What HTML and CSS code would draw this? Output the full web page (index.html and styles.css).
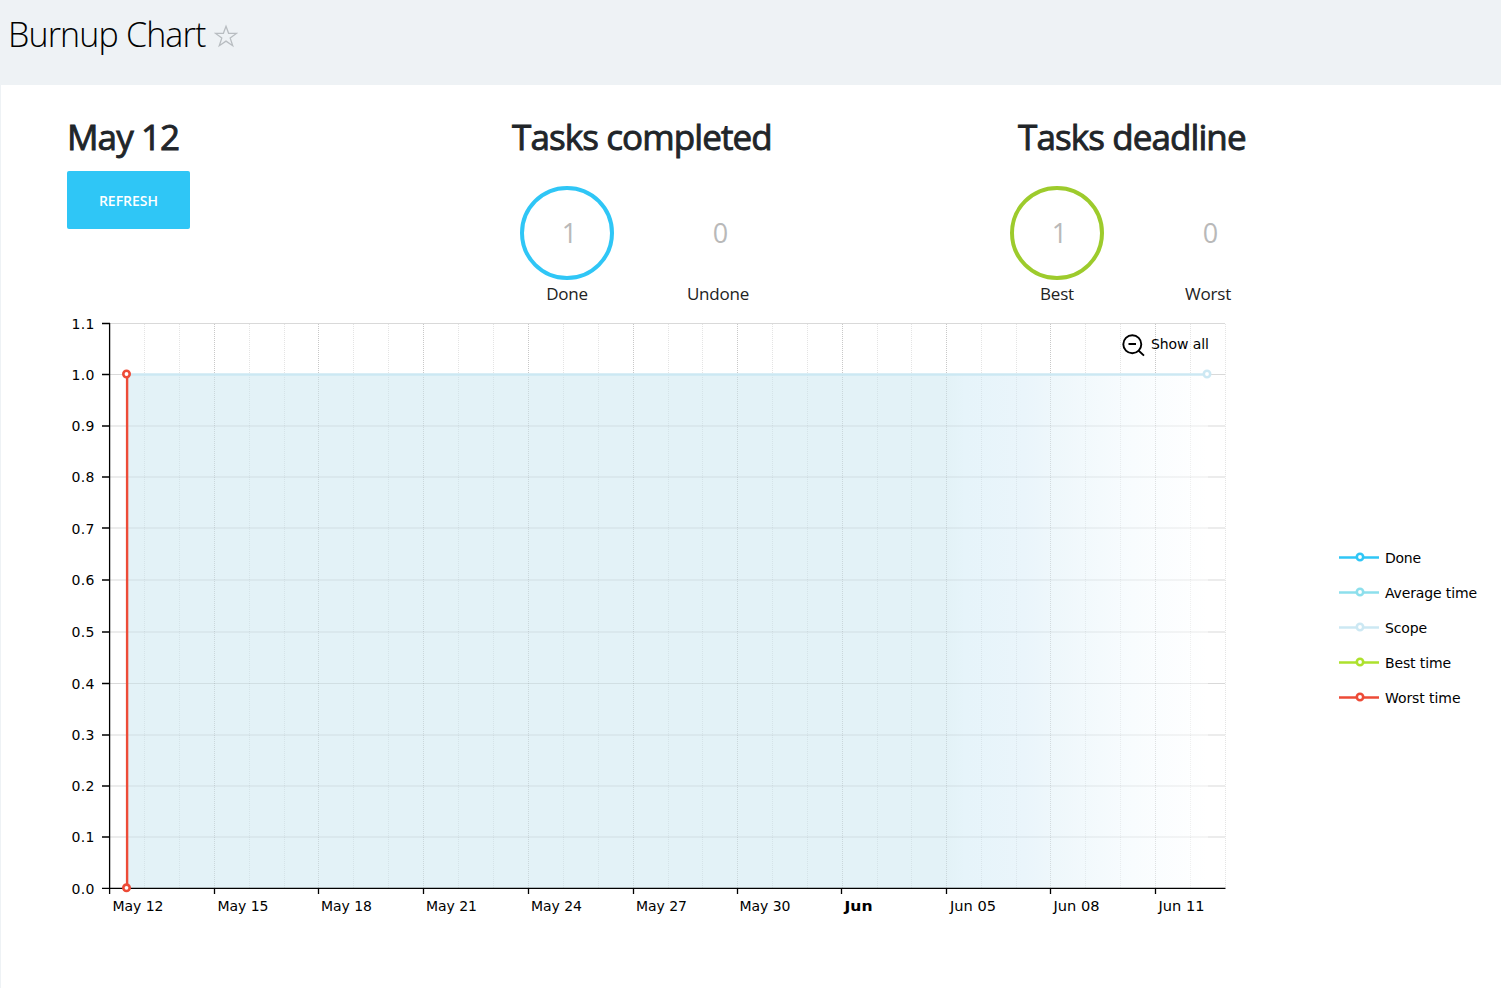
FILE: index.html
```html
<!DOCTYPE html>
<html lang="en">
<head>
<meta charset="utf-8">
<title>Burnup Chart</title>
<link rel="stylesheet" href="styles.css">
</head>
<body>
<header class="page-header">
  <h1 class="page-title">Burnup Chart</h1>
  <svg class="star" width="24" height="24" viewBox="0 0 24 24"><path d="M12 2.3 14.6 9.3 22.4 9.4 16.2 14.1 18.7 21.7 12 17.1 5.3 21.7 7.8 14.1 1.6 9.4 9.4 9.3Z"/></svg>
</header>
<main class="panel">
  <section class="summary">
    <div class="today">
      <h2 class="heading">May 12</h2>
      <button class="refresh">REFRESH</button>
    </div>
    <div class="group">
      <h2 class="heading">Tasks completed</h2>
      <div class="gauges">
        <div class="gauge"><div class="ring ring-done">1</div><span class="caption">Done</span></div>
        <div class="gauge"><div class="ring">0</div><span class="caption">Undone</span></div>
      </div>
    </div>
    <div class="group group-deadline">
      <h2 class="heading">Tasks deadline</h2>
      <div class="gauges">
        <div class="gauge"><div class="ring ring-best">1</div><span class="caption">Best</span></div>
        <div class="gauge"><div class="ring">0</div><span class="caption">Worst</span></div>
      </div>
    </div>
  </section>
  <section class="chart-row">
    <svg class="chart" width="1180" height="620" viewBox="60 310 1180 620">
      <defs>
        <linearGradient id="scope" gradientUnits="userSpaceOnUse" x1="127" y1="0" x2="1208" y2="0">
          <stop offset="0" stop-color="#e3f2f7"/>
          <stop offset=".758" stop-color="#e3f2f7"/>
          <stop offset=".775" stop-color="#e6f4fa"/>
          <stop offset=".83" stop-color="#eaf5fb"/>
          <stop offset=".855" stop-color="#eef7fb"/>
          <stop offset=".93" stop-color="#f8fcfe"/>
          <stop offset="1" stop-color="#ffffff"/>
        </linearGradient>
      </defs>
      <path class="grid-outer" d="M110 323.5H1225M110 374.5H1225M110 426H127M1208 426H1225M110 477H127M1208 477H1225M110 528H127M1208 528H1225M110 580H127M1208 580H1225M110 632H127M1208 632H1225M110 683.5H127M1208 683.5H1225M110 735H127M1208 735H1225M110 786H127M1208 786H1225M110 837H127M1208 837H1225"/>
      <path fill="url(#scope)" d="M127 374.5H1208V888H127Z"/>
      <path class="grid-inner" d="M127 426H1208M127 477H1208M127 528H1208M127 580H1208M127 632H1208M127 683.5H1208M127 735H1208M127 786H1208M127 837H1208"/>
      <path class="grid-minor" d="M144.5 324V374M179.5 324V374M249.5 324V374M284.5 324V374M353.5 324V374M388.5 324V374M458.5 324V374M493.5 324V374M563.5 324V374M598.5 324V374M668.5 324V374M702.5 324V374M772.5 324V374M807.5 324V374M877.5 324V374M911.5 324V374M981.5 324V374M1016.5 324V374M1085.5 324V374M1120.5 324V374M1190.5 324V374M1225.5 324V888"/>
      <path class="grid-minor faint" d="M144.5 375V888M179.5 375V888M249.5 375V888M284.5 375V888M353.5 375V888M388.5 375V888M458.5 375V888M493.5 375V888M563.5 375V888M598.5 375V888M668.5 375V888M702.5 375V888M772.5 375V888M807.5 375V888M877.5 375V888M911.5 375V888M981.5 375V888M1016.5 375V888M1085.5 375V888M1120.5 375V888M1190.5 375V888"/>
      <path class="grid-major" d="M214.5 324V374M318.5 324V374M423.5 324V374M528.5 324V374M633.5 324V374M737.5 324V374M842.5 324V374M946.5 324V374M1050.5 324V374M1155.5 324V374"/>
      <path class="grid-major faint" d="M214.5 375V888M318.5 375V888M423.5 375V888M528.5 375V888M633.5 375V888M737.5 375V888M842.5 375V888M946.5 375V888M1050.5 375V888M1155.5 375V888"/>
      <path class="axis" d="M109.6 323V894M102 888.4H1225.5M102 323.5H110M102 374.5H110M102 426H110M102 477H110M102 528H110M102 580H110M102 632H110M102 683.5H110M102 735H110M102 786H110M102 837H110M214.5 888V894M318.5 888V894M423.5 888V894M528.5 888V894M633.5 888V894M737.5 888V894M841.5 888V894M946.5 888V894M1050.5 888V894M1155.5 888V894"/>
      <path class="line-scope" d="M127 374.5H1207"/>
      <circle class="dot dot-scope" cx="1207" cy="374" r="3.2"/>
      <path class="line-worst" d="M127.1 374V888"/>
      <circle class="dot dot-worst" cx="126.5" cy="374" r="3.2"/>
      <circle class="dot dot-worst" cx="126.5" cy="887.8" r="3.2"/>
      <g class="label">
        <text x="71.5" y="329" textLength="23">1.1</text>
        <text x="71.5" y="380" textLength="23">1.0</text>
        <text x="71.5" y="431" textLength="23">0.9</text>
        <text x="71.5" y="482" textLength="23">0.8</text>
        <text x="71.5" y="534" textLength="23">0.7</text>
        <text x="71.5" y="585" textLength="23">0.6</text>
        <text x="71.5" y="637" textLength="23">0.5</text>
        <text x="71.5" y="689" textLength="23">0.4</text>
        <text x="71.5" y="740" textLength="23">0.3</text>
        <text x="71.5" y="791" textLength="23">0.2</text>
        <text x="71.5" y="842" textLength="23">0.1</text>
        <text x="71.5" y="894" textLength="23">0.0</text>
        <text x="112.5" y="911" textLength="51">May 12</text>
        <text x="217.5" y="911" textLength="51">May 15</text>
        <text x="321" y="911" textLength="51">May 18</text>
        <text x="426" y="911" textLength="51">May 21</text>
        <text x="531" y="911" textLength="51">May 24</text>
        <text x="636" y="911" textLength="51">May 27</text>
        <text x="739.5" y="911" textLength="51">May 30</text>
        <text class="month" x="844.5" y="911" textLength="28" lengthAdjust="spacingAndGlyphs">Jun</text>
        <text x="950" y="911" textLength="46" lengthAdjust="spacingAndGlyphs">Jun 05</text>
        <text x="1053.5" y="911" textLength="46" lengthAdjust="spacingAndGlyphs">Jun 08</text>
        <text x="1158.5" y="911" textLength="46" lengthAdjust="spacingAndGlyphs">Jun 11</text>
        <text x="1151" y="349" textLength="58">Show all</text>
      </g>
      <path class="zoom-out" d="M1138.2 350.2 1144 355.6M1128.5 344H1136"/>
      <circle class="zoom-out" cx="1132.3" cy="344.3" r="9"/>
    </svg>
    <svg class="legend" width="150" height="170" viewBox="1335 543 150 170">
      <g class="key key-done"><path d="M1339 557.5H1379"/><circle cx="1360" cy="557" r="3.2"/></g>
      <g class="key key-average"><path d="M1339 592.5H1379"/><circle cx="1360" cy="592" r="3.2"/></g>
      <g class="key key-scope"><path d="M1339 627.5H1379"/><circle cx="1360" cy="627" r="3.2"/></g>
      <g class="key key-best"><path d="M1339 662.5H1379"/><circle cx="1360" cy="662" r="3.2"/></g>
      <g class="key key-worst"><path d="M1339 697.5H1379"/><circle cx="1360" cy="697" r="3.2"/></g>
      <g class="label">
        <text x="1385" y="563" textLength="36">Done</text>
        <text x="1385" y="598" textLength="92">Average time</text>
        <text x="1385" y="633" textLength="42">Scope</text>
        <text x="1385" y="668" textLength="66">Best time</text>
        <text x="1385" y="703" textLength="75.5">Worst time</text>
      </g>
    </svg>
  </section>
</main>
</body>
</html>
```

FILE: styles.css
```css
* { box-sizing: border-box; }
body { margin: 0; height: 988px; overflow: hidden; background: #fff; color: #212529; font-family: "Open Sans", "Noto Sans", sans-serif; }
.page-header { display: flex; height: 85px; padding: 10px 0 0 8px; background: #eef2f5; }
.page-title { margin: 0; width: 206px; font-size: 34px; font-weight: 300; line-height: 48px; letter-spacing: -.85px; color: #000; white-space: nowrap; }
.star { margin-top: 14px; fill: none; stroke: #b8bdc1; stroke-width: 1.3; }
.panel { height: 903px; padding: 31px 0 0 59px; border-left: 1px solid #eef2f5; }
.summary { display: flex; height: 194px; }
.today { width: 442px; padding-left: 7px; }
.group { width: 490px; padding-left: 10px; }
.heading { margin: 0; height: 42px; font-size: 35px; font-weight: 500; line-height: 41px; letter-spacing: -.9px; -webkit-text-stroke: .9px #212529; white-space: nowrap; }
.group-deadline .heading { margin-left: 16px; }
.refresh { display: block; width: 123px; height: 58px; margin-top: 13px; padding: 0; border: 0; border-radius: 2px; background: #2fc6f6; color: #fff; font: 600 14px "Open Sans", sans-serif; }
.gauges { display: flex; gap: 57px; margin-top: 28px; margin-left: 8px; }
.gauge { width: 94px; text-align: center; }
.ring { height: 94px; padding-left: 5px; border: 4px solid transparent; border-radius: 50%; font-size: 27px; line-height: 86px; color: #b9b9b9; }
.ring-done { border-color: #2fc6f6; }
.ring-best { border-color: #9dcb2c; }
.caption { display: block; font-size: 17px; line-height: 28px; letter-spacing: -.2px; color: #222; }
.chart-row { display: flex; align-items: flex-start; }
.chart, .legend { display: block; flex: none; }
.legend { margin: 233px 0 0 95px; }
.label { font: 14px Verdana, "DejaVu Sans", sans-serif; fill: #000; }
.month { font-weight: 700; }
.chart path { stroke-width: 1; }
.grid-outer { stroke: #d9d9d9; }
.grid-inner { stroke: #000; stroke-opacity: .08; }
.grid-minor { stroke: #e4e4e4; stroke-dasharray: 1 1; }
.grid-major { stroke: #c8c8c8; stroke-dasharray: 1 1; }
.grid-minor.faint { stroke: #000; stroke-opacity: .06; }
.grid-major.faint { stroke: #000; stroke-opacity: .11; }
.axis { fill: none; stroke: #000; }
.chart .axis { stroke-width: 1.3; }
.chart .line-scope { stroke: #cce8f3; stroke-width: 2.4; }
.chart .line-worst { stroke: #ed4b37; stroke-width: 2.4; }
.dot { fill: #fff; stroke-width: 2.6; }
.dot-scope { stroke: #cce8f3; }
.dot-worst { stroke: #ed4b37; }
.chart .zoom-out { fill: none; stroke: #000; stroke-width: 1.9; }
.key path { stroke-width: 2.4; }
.key circle { fill: #fff; stroke-width: 2.6; }
.key-done { stroke: #2fc6f6; }
.key-average { stroke: #8ddfec; }
.key-scope { stroke: #cce8f3; }
.key-best { stroke: #ade12d; }
.key-worst { stroke: #ed4b37; }
```
